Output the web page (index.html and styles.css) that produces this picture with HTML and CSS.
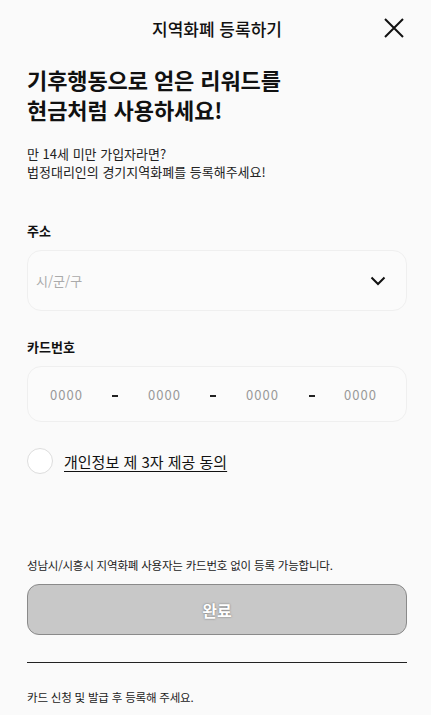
FILE: index.html
```html
<!DOCTYPE html>
<html lang="ko">
<head>
    <meta charset="UTF-8">
    <meta name="viewport" content="width=device-width, initial-scale=1.0">
    <title>지역화폐 등록하기</title>
    <link rel="stylesheet" href="styles.css">
</head>
<body>
    <div class="page">
        <header class="topbar">
            <h1 class="topbar-title">지역화폐 등록하기</h1>
            <button class="close-btn" aria-label="닫기">
                <svg width="20" height="20" viewBox="0 0 20 20">
                    <path d="M1 1L19 19M19 1L1 19" stroke="#111" stroke-width="2" fill="none"/>
                </svg>
            </button>
        </header>

        <section class="intro">
            <h2 class="headline">기후행동으로 얻은 리워드를<br>현금처럼 사용하세요!</h2>
            <p class="subtext">만 14세 미만 가입자라면?<br>법정대리인의 경기지역화폐를 등록해주세요!</p>
        </section>

        <div class="field">
            <div class="field-label">주소</div>
            <div class="box select-box">
                <span class="placeholder">시/군/구</span>
                <svg width="16" height="10" viewBox="0 0 16 10">
                    <path d="M1.5 1.5L8 8L14.5 1.5" stroke="#111" stroke-width="2" fill="none"/>
                </svg>
            </div>
        </div>

        <div class="field">
            <div class="field-label">카드번호</div>
            <div class="box card-box">
                <span class="digits">0000</span>
                <span class="dash"></span>
                <span class="digits">0000</span>
                <span class="dash"></span>
                <span class="digits">0000</span>
                <span class="dash"></span>
                <span class="digits">0000</span>
            </div>
        </div>

        <label class="agree">
            <span class="check"></span>
            <span class="agree-text">개인정보 제 3자 제공 동의</span>
        </label>

        <div class="bottom">
            <p class="notice">성남시/시흥시 지역화폐 사용자는 카드번호 없이 등록 가능합니다.</p>
            <button class="submit-btn">완료</button>
            <hr class="divider">
            <p class="footer-note">카드 신청 및 발급 후 등록해 주세요.</p>
        </div>
    </div>
</body>
</html>
```

FILE: styles.css
```css
body {
    margin: 0;
    background-color: #fafafa;
    color: #111;
    font-family: "Noto Sans CJK KR", "Noto Sans", sans-serif;
}
.page {
    padding: 0 24px 0 27px;
}
.topbar {
    position: relative;
    height: 56px;
    display: flex;
    align-items: center;
    justify-content: center;
}
.topbar-title {
    margin: 0;
    font-size: 17px;
    font-weight: 500;
}
.close-btn {
    position: absolute;
    right: 3px;
    top: 18px;
    padding: 0;
    border: none;
    background: none;
    width: 20px;
    height: 20px;
}
.close-btn svg {
    display: block;
}
.intro {
    padding-top: 8px;
}
.headline {
    margin: 0;
    font-size: 22px;
    line-height: 30px;
    font-weight: 700;
    letter-spacing: -0.1px;
}
.subtext {
    margin: 21px 0 0;
    font-size: 13px;
    line-height: 18px;
    color: #222;
}
.field {
    margin-top: 41px;
}
.field + .field {
    margin-top: 27px;
}
.field-label {
    font-size: 13px;
    font-weight: 700;
    line-height: 18px;
    margin-bottom: 10px;
}
.box {
    box-sizing: border-box;
    background-color: #fbfbfb;
    border: 1px solid #efefef;
    border-radius: 14px;
}
.select-box {
    height: 61px;
    display: flex;
    align-items: center;
    justify-content: space-between;
    padding: 0 20px 0 8px;
}
.placeholder {
    font-size: 13px;
    color: #aaa;
}
.card-box {
    height: 56px;
    display: flex;
    align-items: center;
    justify-content: space-between;
    padding: 0 29px 0 22px;
}
.digits {
    font-size: 13px;
    color: #999;
    letter-spacing: 1px;
}
.dash {
    width: 6px;
    height: 2px;
    background-color: #222;
    margin-top: 3px;
}
.agree {
    display: flex;
    align-items: center;
    gap: 11px;
    margin-top: 26px;
}
.check {
    box-sizing: border-box;
    width: 26px;
    height: 26px;
    border-radius: 50%;
    border: 1px solid #ddd;
    background-color: #fff;
}
.agree-text {
    font-size: 15px;
    text-decoration: underline;
    text-underline-offset: 3px;
}
.bottom {
    margin-top: 83px;
}
.notice {
    margin: 0;
    font-size: 11.5px;
    line-height: 16px;
    color: #222;
    letter-spacing: -0.2px;
}
.submit-btn {
    display: block;
    width: 100%;
    height: 51px;
    margin-top: 11px;
    border: 1px solid #8a8a8a;
    border-radius: 12px;
    background-color: #c8c8c8;
    color: #fff;
    font-family: inherit;
    font-size: 16px;
    font-weight: 700;
    text-shadow: 0 0 2px #666;
}
.divider {
    margin: 27px 0 0;
    border: none;
    border-top: 1px solid #222;
}
.footer-note {
    margin: 26px 0 0;
    font-size: 11.5px;
    line-height: 16px;
    color: #222;
    letter-spacing: -0.2px;
}
```
